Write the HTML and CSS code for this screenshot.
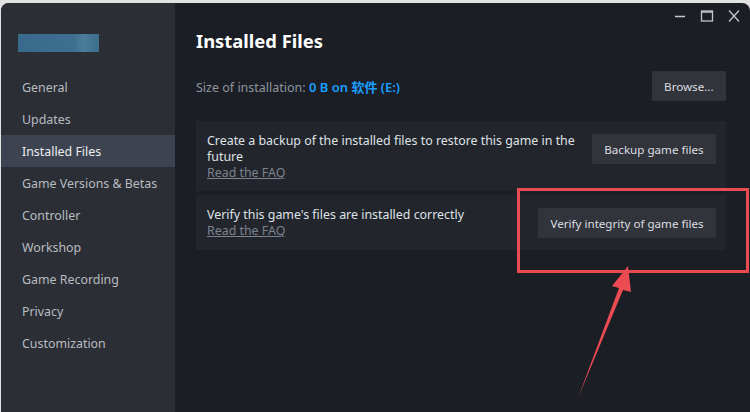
FILE: index.html
```html
<!DOCTYPE html>
<html lang="en">
<head>
    <meta charset="UTF-8">
    <title>Properties - Installed Files</title>
    <link rel="stylesheet" href="styles.css">
</head>
<body>
    <div class="window">
        <!-- left navigation -->
        <aside class="sidebar">
            <div class="logo"></div>
            <ul class="nav">
                <li>General</li>
                <li>Updates</li>
                <li class="active">Installed Files</li>
                <li>Game Versions &amp; Betas</li>
                <li>Controller</li>
                <li>Workshop</li>
                <li>Game Recording</li>
                <li>Privacy</li>
                <li>Customization</li>
            </ul>
        </aside>

        <main class="main">
            <div class="titlebar">
                <svg class="ctl" width="14" height="14" viewBox="0 0 14 14"><path d="M2 7.5h10" stroke="#c4c8cc" stroke-width="1.3"/></svg>
                <svg class="ctl" width="14" height="14" viewBox="0 0 14 14"><rect x="1.5" y="2" width="11" height="10" fill="none" stroke="#c4c8cc" stroke-width="1.3"/><path d="M1.5 3h11" stroke="#c4c8cc" stroke-width="1.5"/></svg>
                <svg class="ctl" width="14" height="14" viewBox="0 0 14 14"><path d="M2 1.5l10 11M12 1.5l-10 11" stroke="#c4c8cc" stroke-width="1.3"/></svg>
            </div>
            <h1 class="title">Installed Files</h1>

            <div class="size-row">
                <span class="size-label">Size of installation: <b class="size-value">0 B on 软件 (E:)</b></span>
                <button class="btn">Browse...</button>
            </div>

            <div class="item item-top">
                <div class="item-text">
                    <p>Create a backup of the installed files to restore this game in the future</p>
                    <a class="faq">Read the FAQ</a>
                </div>
                <button class="btn">Backup game files</button>
            </div>
            <div class="item">
                <div class="item-text">
                    <p>Verify this game's files are installed correctly</p>
                    <a class="faq">Read the FAQ</a>
                </div>
                <button class="btn">Verify integrity of game files</button>
            </div>
        </main>
    </div>

    <!-- red annotation drawn over the screenshot -->
    <svg class="annotation" width="750" height="412" viewBox="0 0 750 412">
        <rect x="518.5" y="189.5" width="229" height="82" fill="none" stroke="#ec4b52" stroke-width="3"/>
        <path d="M628 266 L612 286 L619 288 L578 398 L623 290 L631 292 Z" fill="#ec4b52"/>
    </svg>
</body>
</html>
```

FILE: styles.css
```css
* {
    box-sizing: border-box;
}
body {
    margin: 0;
    background: #e2e2e2;
    font-family: "Noto Sans", "Noto Sans CJK SC", sans-serif;
    font-size: 12.4px;
    width: 750px;
    height: 412px;
    overflow: hidden;
    position: relative;
}
.window {
    display: flex;
    margin: 3px 0 0 1px;
    height: 409px;
    border-radius: 8px 8px 0 0;
    overflow: hidden;
    background: #1b1e25;
}

/* sidebar */
.sidebar {
    width: 174px;
    flex-shrink: 0;
    background: #2b2e34;
    padding-top: 31px;
}
.logo {
    width: 81px;
    height: 18px;
    margin-left: 17px;
    background: linear-gradient(90deg, #386b8b, #3d7090 70%, #4a7d99 80%, #3d6f8d);
}
.nav {
    list-style: none;
    margin: 19px 0 0;
    padding: 0;
}
.nav li {
    height: 32px;
    line-height: 34px;
    padding-left: 21px;
    color: #b8bcc1;
}
.nav li.active {
    background: #3d4350;
    color: #eceef1;
}

/* main panel */
.main {
    flex: 1;
    padding: 0 24px 0 21px;
}
.titlebar {
    height: 26px;
    display: flex;
    justify-content: flex-end;
    align-items: center;
    gap: 13px;
    margin-right: -15px;
}
.ctl {
    display: block;
}
.title {
    margin: 0;
    font-size: 18.4px;
    line-height: 24px;
    font-weight: bold;
    color: #ffffff;
}
.size-row {
    margin-top: 18px;
    display: flex;
    justify-content: space-between;
    align-items: center;
}
.size-label {
    color: #8e959e;
    font-size: 12.5px;
}
.size-value {
    color: #1a9fff;
    font-size: 13px;
    font-weight: 600;
}
.btn {
    height: 30px;
    padding: 0 12.5px;
    border: none;
    border-radius: 2px;
    background: #31343b;
    color: #dcdee1;
    font-family: inherit;
    font-size: 11.6px;
}
.item {
    display: flex;
    align-items: center;
    background: #22252c;
    padding: 12px 10px 11px 11px;
    margin-bottom: 4px;
}
.item-top {
    margin-top: 20px;
    align-items: flex-start;
}
.item-top .btn {
    margin-top: 1px;
}
.item-text {
    flex: 1;
    padding-right: 12px;
}
.item-top .item-text {
    margin-bottom: -1px;
}
.item-text p {
    margin: 0;
    color: #dfe2e6;
    line-height: 16px;
}
.faq {
    display: block;
    color: #7c838c;
    line-height: 16px;
    text-decoration: underline;
}

.annotation {
    position: absolute;
    left: 0;
    top: 0;
    pointer-events: none;
}
```
